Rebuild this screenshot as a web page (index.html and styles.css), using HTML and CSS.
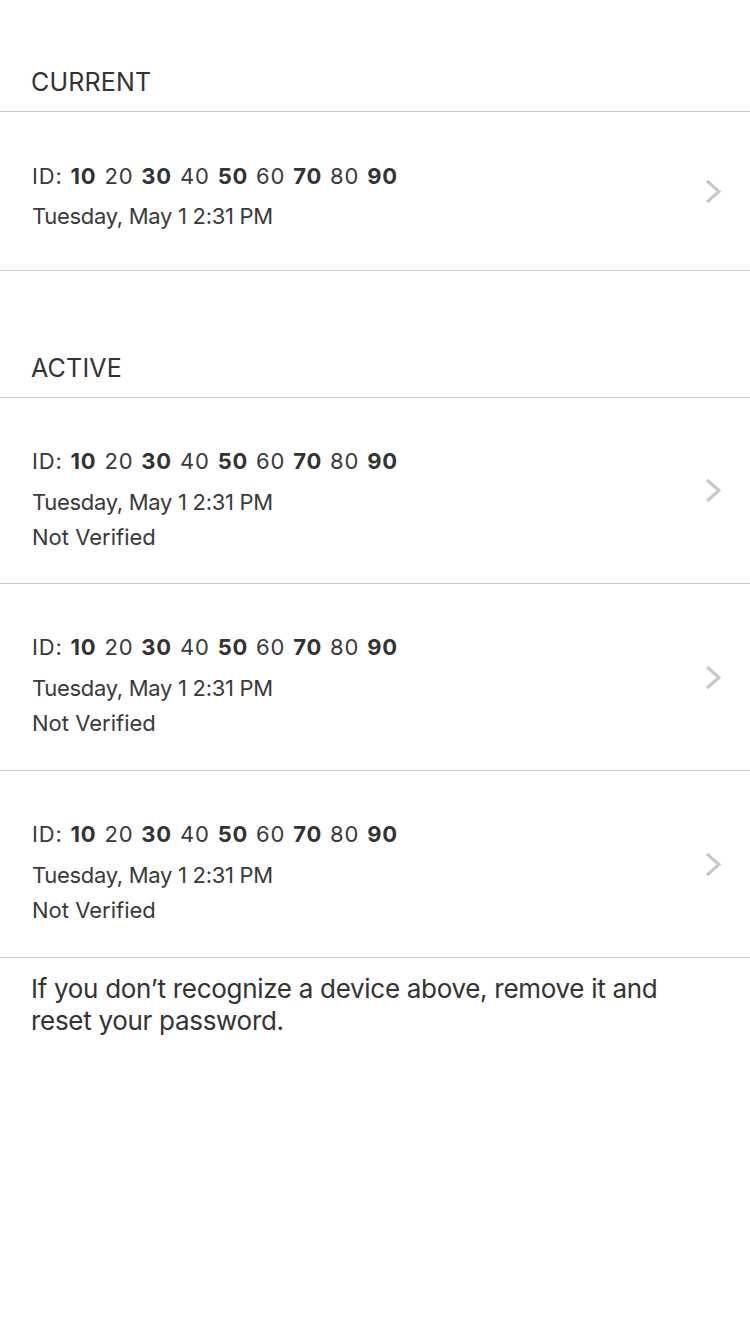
FILE: index.html
```html
<!DOCTYPE html>
<html>
<head>
<meta charset="utf-8">
<link rel="stylesheet" href="styles.css">
</head>
<body>
<div class="page">
  <div class="section-head first">CURRENT</div>
  <div class="row">
    <div class="info current">
      <div class="id">ID: <b>10</b> 20 <b>30</b> 40 <b>50</b> 60 <b>70</b> 80 <b>90</b></div>
      <div class="date">Tuesday, May 1 2:31 PM</div>
    </div>
    <svg class="chev" width="18" height="25" viewBox="0 0 18 25"><path d="M3 2 L15 12.5 L3 23" fill="none" stroke="#c7c7cc" stroke-width="3"/></svg>
  </div>

  <div class="section-head second">ACTIVE</div>
  <div class="row">
    <div class="info active">
      <div class="id">ID: <b>10</b> 20 <b>30</b> 40 <b>50</b> 60 <b>70</b> 80 <b>90</b></div>
      <div class="date">Tuesday, May 1 2:31 PM</div>
      <div class="status">Not Verified</div>
    </div>
    <svg class="chev" width="18" height="25" viewBox="0 0 18 25"><path d="M3 2 L15 12.5 L3 23" fill="none" stroke="#c7c7cc" stroke-width="3"/></svg>
  </div>
  <div class="row">
    <div class="info active">
      <div class="id">ID: <b>10</b> 20 <b>30</b> 40 <b>50</b> 60 <b>70</b> 80 <b>90</b></div>
      <div class="date">Tuesday, May 1 2:31 PM</div>
      <div class="status">Not Verified</div>
    </div>
    <svg class="chev" width="18" height="25" viewBox="0 0 18 25"><path d="M3 2 L15 12.5 L3 23" fill="none" stroke="#c7c7cc" stroke-width="3"/></svg>
  </div>
  <div class="row">
    <div class="info active">
      <div class="id">ID: <b>10</b> 20 <b>30</b> 40 <b>50</b> 60 <b>70</b> 80 <b>90</b></div>
      <div class="date">Tuesday, May 1 2:31 PM</div>
      <div class="status">Not Verified</div>
    </div>
    <svg class="chev" width="18" height="25" viewBox="0 0 18 25"><path d="M3 2 L15 12.5 L3 23" fill="none" stroke="#c7c7cc" stroke-width="3"/></svg>
  </div>

  <p class="footer">If you don’t recognize a device above, remove it and reset your password.</p>
</div>
</body>
</html>
```
FILE: styles.css
```css
html, body {
  margin: 0;
  padding: 0;
  background: #fff;
}
body {
  font-family: Inter, "Noto Sans", sans-serif;
  color: #333;
}
.page {
  width: 750px;
}
.section-head {
  font-size: 25px;
  line-height: 30px;
  padding-left: 31px;
  padding-bottom: 14px;
  border-bottom: 1px solid #c8c8c8;
  letter-spacing: 0.2px;
}
.section-head.first {
  padding-top: 67px;
}
.section-head.second {
  padding-top: 82px;
}
.row {
  display: flex;
  align-items: center;
  justify-content: space-between;
  padding-left: 32px;
  padding-right: 28px;
  border-bottom: 1px solid #c8c8c8;
}
.info {
  display: flex;
  flex-direction: column;
}
.info.current {
  padding-top: 49px;
  padding-bottom: 39px;
}
.info.active {
  padding-top: 48px;
  padding-bottom: 31px;
}
.row + .row .info.active {
  padding-bottom: 32px;
}
.id {
  font-size: 22px;
  line-height: 30px;
  letter-spacing: 0.8px;
  word-spacing: 1px;
  color: #3a3a3a;
}
.id b {
  font-weight: 700;
  color: #333;
}
.date {
  font-size: 22px;
  line-height: 30px;
  margin-top: 10px;
  letter-spacing: -0.3px;
  color: #3a3a3a;
}
.active .date {
  margin-top: 11px;
}
.status {
  font-size: 22px;
  line-height: 30px;
  margin-top: 5px;
  letter-spacing: 0px;
  color: #3a3a3a;
}
.chev {
  display: block;
}
.footer {
  margin: 0;
  padding: 15px 60px 0 31px;
  font-size: 26px;
  line-height: 32px;
  letter-spacing: -0.3px;
}
```
